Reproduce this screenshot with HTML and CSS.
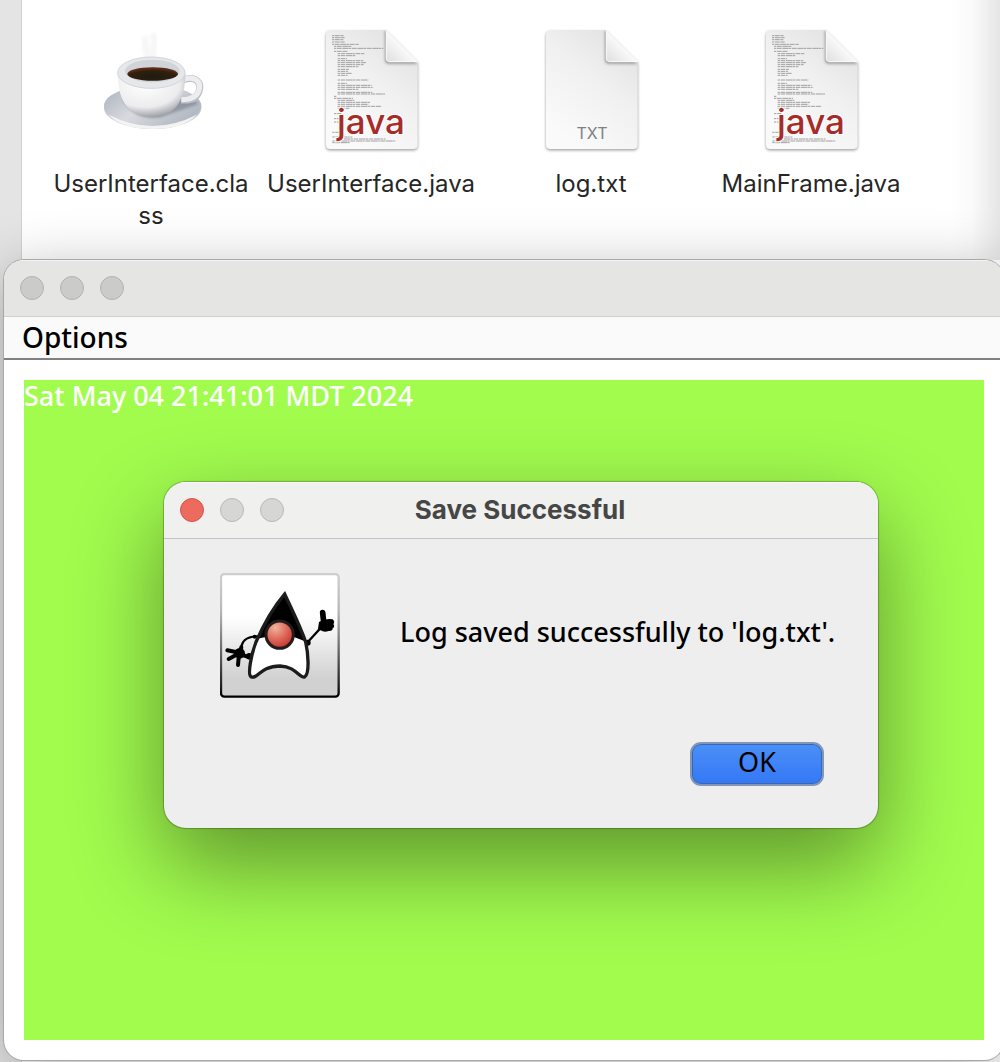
FILE: index.html
```
<!DOCTYPE html>
<html lang="en">
<head>
<meta charset="utf-8">
<title>Save Successful</title>
<link rel="stylesheet" href="styles.css">
</head>
<body>
<svg class="defs" aria-hidden="true">
  <defs>
    <linearGradient id="paper" x1="1" y1="0" x2="0.4" y2="1"><stop offset="0" stop-color="#dedede"/><stop offset="0.5" stop-color="#f0f0f0"/><stop offset="1" stop-color="#fafafa"/></linearGradient>
    <linearGradient id="fold" x1="0" y1="1" x2="0.6" y2="0.4"><stop offset="0" stop-color="#dedede"/><stop offset="1" stop-color="#ffffff"/></linearGradient>
    <filter id="soft" x="-20%" y="-20%" width="140%" height="140%"><feGaussianBlur stdDeviation="5"/></filter>
    <clipPath id="sheet"><path d="M60 29H228L322 123V372Q322 385 309 385H60Q47 385 47 372V42Q47 29 60 29Z"/></clipPath>
    <g id="page">
      <path d="M60 33H228L322 127V376Q322 389 309 389H60Q47 389 47 376V46Q47 33 60 33Z" fill="#000" opacity="0.4" filter="url(#soft)"/>
      <path d="M60 29H228L322 123V372Q322 385 309 385H60Q47 385 47 372V42Q47 29 60 29Z" fill="url(#paper)"/>
      <g clip-path="url(#sheet)"><path d="M224 29V118Q224 129 235 129H322L228 29Z" fill="#000" opacity="0.35" filter="url(#soft)"/></g>
      <path d="M228 30L321 123H238Q228 123 228 113Z" fill="url(#fold)" stroke="#fff" stroke-width="3"/>
    </g>
    <g id="code" fill="none" stroke="#a0a0a0" stroke-width="3">
      <path stroke-dasharray="7 2 14 2 19 1" d="M65 45h35M65 51h38M65 57h34M65 64h38M65 71h80M71 77h53M71 83h148M71 92h40M82 99h80M82 105h55M82 114h28M82 120h77M82 126h85M82 132h78M82 138h62M82 146h34M82 152h31M82 158h42M82 164h30M82 178h92M82 188h28M82 194h102M82 200h105M82 206h62M82 215h104M82 220h143M71 227h8M71 233h57M82 239h50M82 245h98M82 251h92M82 257h130M82 263h35M71 279h22M71 294h20M71 304h18M66 335h20M66 349h60M76 355h150M66 361h190M66 366h52"/>
    </g>
    <radialGradient id="china" cx="0.4" cy="0.25" r="0.8"><stop offset="0" stop-color="#ffffff"/><stop offset="0.65" stop-color="#ececee"/><stop offset="1" stop-color="#8e9197"/></radialGradient>
    <linearGradient id="saucer" x1="0" x2="1" y2="0.5"><stop offset="0" stop-color="#a8b0bb"/><stop offset="0.5" stop-color="#d8dadf"/><stop offset="1" stop-color="#b4bac3"/></linearGradient>
    <radialGradient id="coffee" cx="0.5" cy="0.7" r="0.6"><stop offset="0" stop-color="#1e1b10"/><stop offset="0.75" stop-color="#30200f"/><stop offset="1" stop-color="#5c2a16"/></radialGradient>
    <linearGradient id="tile" y2="1" x2="0"><stop offset="0.35" stop-color="#fff"/><stop offset="0.85" stop-color="#d1d1d1"/></linearGradient>
    <linearGradient id="edge" y2="1" x2="0"><stop offset="0" stop-color="#cfcfcf"/><stop offset="0.3" stop-color="#b8b8b8"/><stop offset="0.9" stop-color="#222"/><stop offset="1" stop-color="#000"/></linearGradient>
    <radialGradient id="nose" cx="0.35" cy="0.25" r="0.75"><stop offset="0" stop-color="#efb49c"/><stop offset="0.55" stop-color="#df6a5c"/><stop offset="1" stop-color="#c6382f"/></radialGradient>
  </defs>
</svg>

<section class="finder" aria-label="Files">
  <ul class="files">
    <li class="file">
      <svg class="file-icon" viewBox="46 13 330 390" aria-hidden="true">
        <path d="M206 112C188 90 200 68 190 48M222 118C204 94 236 66 214 40" fill="none" stroke="#bbb" stroke-width="20" opacity="0.12" filter="url(#soft)"/>
        <ellipse cx="216" cy="261" rx="146" ry="64" fill="#c9cbd0"/>
        <ellipse cx="216" cy="256" rx="146" ry="62" fill="url(#saucer)"/>
        <path d="M84 282Q216 350 348 282Q310 325 216 325Q122 325 84 282Z" fill="#f3f3f4"/>
        <path d="M125 235Q160 300 240 290L352 250Q350 235 300 232Z" fill="#69727f" opacity="0.55" filter="url(#soft)"/>
        <path d="M306 178C346 164 364 186 355 212C348 234 328 240 302 238" fill="none" stroke="#bcc0c6" stroke-width="21"/>
        <path d="M306 177C346 163 363 185 354 211C347 232 328 237 302 237" fill="none" stroke="#ededef" stroke-width="16"/>
        <path d="M111 158C111 220 130 290 213 290C294 290 314 222 314 158Z" fill="url(#china)"/>
        <ellipse cx="212" cy="156" rx="101" ry="47" fill="#e6e7ea" stroke="#d2d5da" stroke-width="3"/>
        <ellipse cx="215" cy="151" rx="82" ry="34" fill="#d0d3d8"/>
        <ellipse cx="216" cy="160" rx="76" ry="20" fill="url(#coffee)"/>
      </svg>
      <span class="file-name">UserInterface.cla<br>ss</span>
    </li>
    <li class="file">
      <svg class="file-icon" viewBox="17 13 330 390" aria-hidden="true">
        <use href="#page"/><use href="#code"/>
        <text class="badge-java" x="182" y="341">java</text>
      </svg>
      <span class="file-name">UserInterface.java</span>
    </li>
    <li class="file">
      <svg class="file-icon" viewBox="17 13 330 390" aria-hidden="true">
        <use href="#page"/>
        <text class="badge-txt" x="185" y="354">TXT</text>
      </svg>
      <span class="file-name">log.txt</span>
    </li>
    <li class="file">
      <svg class="file-icon" viewBox="17 13 330 390" aria-hidden="true">
        <use href="#page"/><use href="#code"/>
        <text class="badge-java" x="182" y="341">java</text>
      </svg>
      <span class="file-name">MainFrame.java</span>
    </li>
  </ul>
</section>

<main class="window">
  <header class="titlebar">
    <button class="light" aria-label="Close"></button>
    <button class="light" aria-label="Minimize"></button>
    <button class="light" aria-label="Zoom"></button>
  </header>
  <nav class="menubar"><button class="menu">Options</button></nav>
  <div class="canvas"><p class="stamp">Sat May 04 21:41:01 MDT 2024</p></div>
</main>

<section class="dialog" role="dialog" aria-labelledby="dialog-title">
  <header class="dialog-bar">
    <div class="lights">
      <button class="light close" aria-label="Close"></button>
      <button class="light" aria-label="Minimize"></button>
      <button class="light" aria-label="Zoom"></button>
    </div>
    <h1 class="dialog-title" id="dialog-title">Save Successful</h1>
  </header>
  <div class="dialog-body">
    <svg class="duke" viewBox="60 39 360 375" aria-hidden="true">
      <rect x="63" y="42" width="353" height="368" rx="10" fill="url(#tile)" stroke="url(#edge)" stroke-width="7"/>
      <path d="M172 229C140 230 124 240 124 268M320 250L362 204" fill="none" stroke="#000" stroke-width="7"/>
      <path d="M118 278L82 271M118 280L86 297M117 282L114 315M120 276L124 262M122 284L148 291" fill="none" stroke="#000" stroke-width="12" stroke-linecap="round"/>
      <circle cx="119" cy="280" r="16"/><circle cx="148" cy="289" r="10"/>
      <circle cx="164" cy="230" r="6"/><circle cx="323" cy="248" r="9"/>
      <path d="M368 158L371 186" fill="none" stroke="#000" stroke-width="17" stroke-linecap="round"/>
      <path d="M357 186Q376 174 398 178Q406 186 400 192Q406 200 398 205Q398 214 386 213Q372 218 362 211L353 213Z"/>
      <path d="M254 102C220 142 190 195 168 246C154 282 142 344 153 350C172 360 180 318 240 318C290 320 296 355 314 351C330 340 324 278 317 246C300 196 272 142 254 102Z" fill="#fff"/>
      <path d="M254 102C220 142 190 190 172 236L200 230H280L315 244C300 196 272 142 254 102Z" fill="#000"/>
      <path d="M254 102C220 142 190 195 168 246C154 282 142 344 153 350C172 360 180 318 240 318C290 320 296 355 314 351C330 340 324 278 317 246C300 196 272 142 254 102Z" fill="none" stroke="#1c1c1c" stroke-width="10"/>
      <circle cx="239" cy="224" r="41" fill="url(#nose)" stroke="#221c1c" stroke-width="9"/>
    </svg>
    <p class="message">Log saved successfully to 'log.txt'.</p>
  </div>
  <footer class="dialog-actions"><button class="ok">OK</button></footer>
</section>
</body>
</html>
```

FILE: styles.css
```
* { box-sizing: border-box; }

body {
  margin: 0;
  min-height: 100vh;
  display: flex;
  flex-direction: column;
  position: relative;
  overflow: hidden;
  background: linear-gradient(to right, #e4e4e4 21px, #d0d0d0 21px, #d0d0d0 22px, #ffffff 22px);
  color: #000;
  font-family: "Noto Sans", sans-serif;
}

button {
  margin: 0;
  padding: 0;
  border: 0;
  background: none;
  color: inherit;
  font: inherit;
}

.defs { position: absolute; width: 0; height: 0; }

.finder {
  height: 260px;
  padding: 25px 79px 0 41px;
  background: linear-gradient(to left, rgba(0, 0, 0, 0.1), rgba(0, 0, 0, 0.02) 28px, transparent 50px);
}

.files {
  display: grid;
  grid-template-columns: repeat(4, 1fr);
  margin: 0;
  padding: 0;
  list-style: none;
}

.file {
  display: flex;
  flex-direction: column;
  align-items: center;
  gap: 13px;
}

.file-icon { width: 110px; height: 130px; }

.file-name {
  font: 24px/32px Inter, sans-serif;
  color: #262626;
  text-align: center;
  white-space: nowrap;
}

.badge-java {
  font: 500 105px Inter, sans-serif;
  fill: #a52c28;
  stroke: #ffffff;
  stroke-width: 6px;
  paint-order: stroke;
  text-anchor: middle;
}

.badge-txt {
  font: 48px Inter, sans-serif;
  fill: #808080;
  text-anchor: middle;
}

.window {
  flex: 1;
  display: flex;
  flex-direction: column;
  margin: 0 -4px 2px 4px;
  border-radius: 20px;
  background: #ffffff;
  box-shadow: 0 0 0 1px #a8a8a8, 0 12px 60px rgba(0, 0, 0, 0.3);
  overflow: hidden;
}

.titlebar {
  display: flex;
  align-items: center;
  gap: 16px;
  height: 57px;
  padding: 0 16px 2px;
  border-top: 1px solid #f4f4f4;
  border-bottom: 1px solid #d0d0ce;
  background: #e5e5e3;
}

.light {
  width: 24px;
  height: 24px;
  border: 1px solid #b2b2b0;
  border-radius: 50%;
  background: #cbcbc9;
}

.menubar {
  height: 43px;
  padding: 0 18px;
  border-bottom: 2px solid #808080;
  background: #fafafa;
}

.menu {
  font-size: 28px;
  font-weight: 500;
  line-height: 40px;
}

.canvas {
  flex: 1;
  margin: 20px;
  background: #a1fc4e;
}

.stamp {
  margin: 0;
  color: #ffffff;
  font-size: 27px;
  font-weight: 500;
  line-height: 32px;
}

.dialog {
  position: absolute;
  top: 482px;
  left: 164px;
  width: 714px;
  border-radius: 22px;
  background: #eeeeee;
  box-shadow: 0 0 1px 1px rgba(0, 0, 0, 0.25), 0 36px 90px rgba(0, 0, 0, 0.42);
  overflow: hidden;
}

.dialog-bar {
  display: grid;
  grid-template-columns: 1fr auto 1fr;
  align-items: center;
  height: 57px;
  padding: 0 18px 2px 16px;
  border-top: 1px solid #ffffff;
  border-bottom: 1px solid #c4c4c2;
  background: #f0f0ee;
}

.lights { display: flex; gap: 16px; }

.dialog .light { background: #d6d6d4; border-color: #b8b8b6; }

.dialog .close { background: #ec6a5e; border-color: #d5564b; }

.dialog-title {
  margin: 0;
  color: #464646;
  font: 700 26px/32px Inter, sans-serif;
}

.dialog-body {
  display: flex;
  align-items: center;
  gap: 60px;
  padding: 34px 40px 0 56px;
}

.duke { width: 120px; height: 125px; }

.message {
  margin: 0;
  padding-bottom: 8px;
  font-size: 27px;
  font-weight: 500;
  line-height: 36px;
  white-space: nowrap;
}

.dialog-actions {
  display: flex;
  justify-content: flex-end;
  padding: 44px 54px 42px;
}

.ok {
  width: 134px;
  height: 44px;
  padding-bottom: 4px;
  border: 2px solid #8396b5;
  border-radius: 11px;
  background: linear-gradient(#4b8ff7, #3478f6);
  box-shadow: inset 0 0 0 1px #3768b5;
  font-size: 27px;
  line-height: 36px;
}
```
